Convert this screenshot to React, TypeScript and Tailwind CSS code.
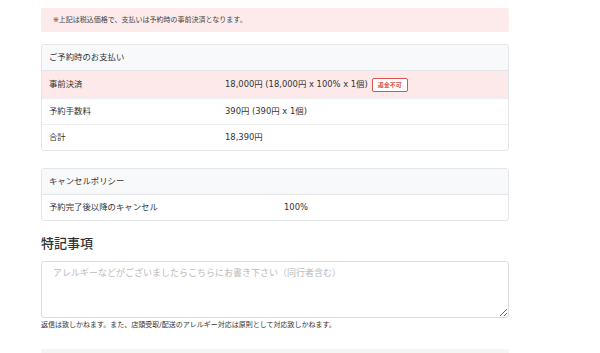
export default function App() {
    return (
        <div
            className="w-[600px] h-[353px] overflow-hidden bg-white text-[#333]"
            style={{ fontFamily: '"DejaVu Sans", "Noto Sans CJK JP", sans-serif' }}
        >
            <div className="ml-[41px] w-[468px] pt-[8px]">
                <div className="h-[24px] rounded-[2px] bg-[#fdeaea] px-[12px] flex items-center text-[7px] text-[#444]">
                    ※上記は税込価格で、支払いは予約時の事前決済となります。
                </div>

                <div className="mt-[12px] border border-[#e3e5e8] rounded-[3px] overflow-hidden text-[8.4px]">
                    <div className="h-[26px] bg-[#f7f9fb] border-b border-[#e3e5e8] flex items-center px-[7px]">
                        ご予約時のお支払い
                    </div>
                    <div className="h-[28px] bg-[#fde9e9] border-b border-[#eceef0] flex items-center px-[7px]">
                        <div className="w-[176px]">事前決済</div>
                        <div className="flex items-center">
                            18,000円 (18,000円 x 100% x 1個)
                            <span className="ml-[4px] h-[14px] px-[5px] border border-[#d9534f] rounded-[2px] bg-white text-[#d9534f] text-[6px] font-bold flex items-center">
                                返金不可
                            </span>
                        </div>
                    </div>
                    <div className="h-[26px] border-b border-[#eceef0] flex items-center px-[7px]">
                        <div className="w-[176px]">予約手数料</div>
                        <div>390円 (390円 x 1個)</div>
                    </div>
                    <div className="h-[25px] flex items-center px-[7px]">
                        <div className="w-[176px]">合計</div>
                        <div>18,390円</div>
                    </div>
                </div>

                <div className="mt-[17px] border border-[#e3e5e8] rounded-[3px] overflow-hidden text-[8.4px]">
                    <div className="h-[26px] bg-[#f7f9fb] border-b border-[#e3e5e8] flex items-center px-[7px]">
                        キャンセルポリシー
                    </div>
                    <div className="h-[25px] flex items-center px-[7px]">
                        <div className="w-[235px]">予約完了後以降のキャンセル</div>
                        <div>100%</div>
                    </div>
                </div>

                <h2 className="mt-[15px] text-[13px] font-medium leading-[16px]">特記事項</h2>

                <textarea
                    className="mt-[9px] block w-[468px] h-[57px] border border-[#dcdee0] rounded-[3px] px-[11px] py-[5px] text-[9px] placeholder:text-[#bbb] outline-none"
                    placeholder="アレルギーなどがございましたらこちらにお書き下さい（同行者含む）"
                />

                <p className="mt-[1px] text-[7px] leading-[12px] text-[#333]">
                    返信は致しかねます。また、店頭受取/配送のアレルギー対応は原則として対応致しかねます。
                </p>

                <div className="mt-[18px] h-[10px] bg-[#f5f5f3]" />
            </div>
        </div>
    );
}
